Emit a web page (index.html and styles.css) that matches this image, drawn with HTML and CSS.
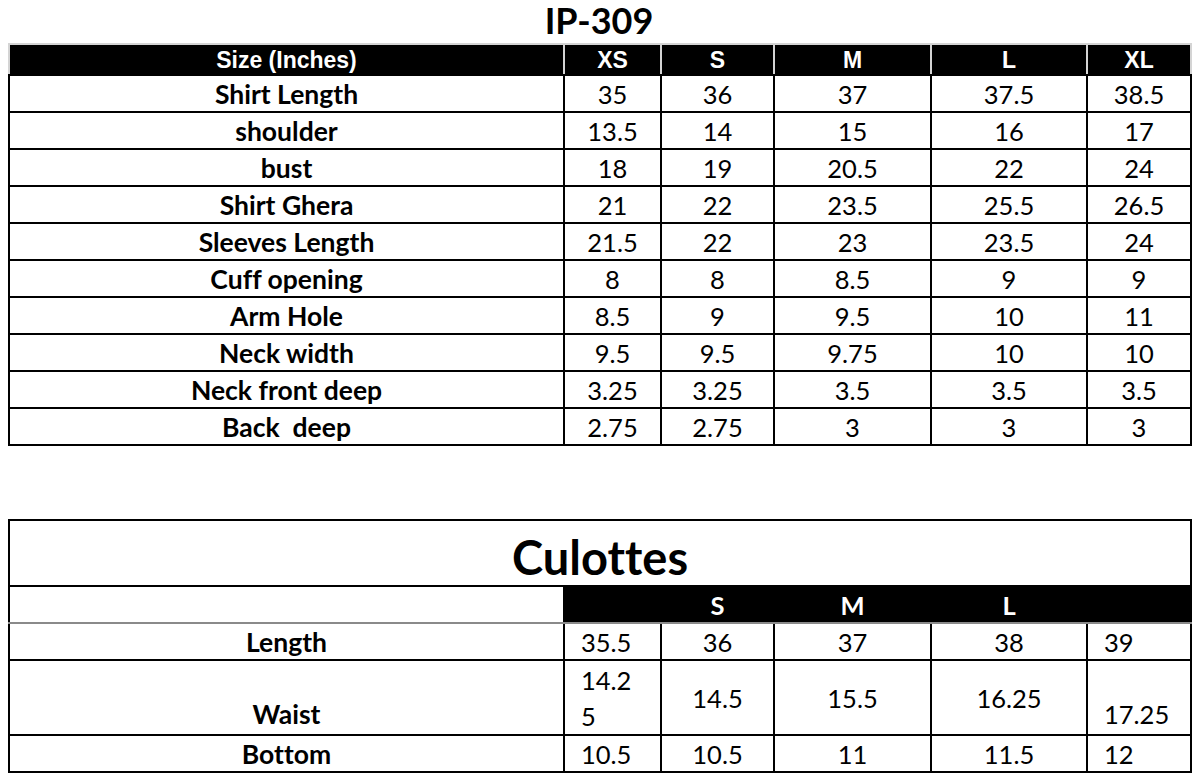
FILE: index.html
```html
<!DOCTYPE html>
<html>
<head>
<meta charset="utf-8">
<link rel="stylesheet" href="styles.css">
</head>
<body>
<div class="page">
  <h1 class="title">IP-309</h1>
  <table class="chart">
    <colgroup>
      <col class="c-label"><col class="c-xs"><col class="c-s"><col class="c-m"><col class="c-l"><col class="c-xl">
    </colgroup>
    <thead>
      <tr class="head">
        <th>Size (Inches)</th><th>XS</th><th>S</th><th>M</th><th>L</th><th>XL</th>
      </tr>
    </thead>
    <tbody>
      <tr><th>Shirt Length</th><td>35</td><td>36</td><td>37</td><td>37.5</td><td>38.5</td></tr>
      <tr><th>shoulder</th><td>13.5</td><td>14</td><td>15</td><td>16</td><td>17</td></tr>
      <tr><th>bust</th><td>18</td><td>19</td><td>20.5</td><td>22</td><td>24</td></tr>
      <tr><th>Shirt Ghera</th><td>21</td><td>22</td><td>23.5</td><td>25.5</td><td>26.5</td></tr>
      <tr><th>Sleeves Length</th><td>21.5</td><td>22</td><td>23</td><td>23.5</td><td>24</td></tr>
      <tr><th>Cuff opening</th><td>8</td><td>8</td><td>8.5</td><td>9</td><td>9</td></tr>
      <tr><th>Arm Hole</th><td>8.5</td><td>9</td><td>9.5</td><td>10</td><td>11</td></tr>
      <tr><th>Neck width</th><td>9.5</td><td>9.5</td><td>9.75</td><td>10</td><td>10</td></tr>
      <tr><th>Neck front deep</th><td>3.25</td><td>3.25</td><td>3.5</td><td>3.5</td><td>3.5</td></tr>
      <tr><th>Back&nbsp; deep</th><td>2.75</td><td>2.75</td><td>3</td><td>3</td><td>3</td></tr>
    </tbody>
  </table>

  <table class="chart culottes">
    <colgroup>
      <col class="c-label"><col class="c-xs"><col class="c-s"><col class="c-m"><col class="c-l"><col class="c-xl">
    </colgroup>
    <tbody>
      <tr class="cap"><td colspan="6">Culottes</td></tr>
      <tr class="chead">
        <td class="blank"></td><td></td><td>S</td><td>M</td><td>L</td><td></td>
      </tr>
      <tr class="r37"><th>Length</th><td class="left">35.5</td><td>36</td><td>37</td><td>38</td><td class="left">39</td></tr>
      <tr class="waist"><th>Waist</th><td class="left">14.2<br>5</td><td>14.5</td><td>15.5</td><td>16.25</td><td class="left bottom">17.25</td></tr>
      <tr class="r37"><th>Bottom</th><td class="left">10.5</td><td>10.5</td><td>11</td><td>11.5</td><td class="left">12</td></tr>
    </tbody>
  </table>
</div>
</body>
</html>
```

FILE: styles.css
```css
html, body {
  margin: 0;
  padding: 0;
  background: #ffffff;
}

.page {
  padding: 0 0 0 8px;
  font-family: Lato, "Open Sans", sans-serif;
  font-variant-ligatures: none;
  color: #000;
}

.title {
  margin: 0;
  width: 1182px;
  height: 43px;
  text-align: center;
  font-size: 36px;
  font-weight: 700;
  line-height: 40px;
  box-sizing: border-box;
}

.chart {
  width: 1182px;
  table-layout: fixed;
  border-collapse: collapse;
  font-size: 25.5px;
}

.c-label { width: 555px; }
.c-xs { width: 97px; }
.c-s { width: 113px; }
.c-m { width: 157px; }
.c-l { width: 156px; }
.c-xl { width: 104px; }

.chart th,
.chart td {
  border: 2px solid #000;
  padding: 0;
  text-align: center;
  vertical-align: middle;
  height: 37px;
  box-sizing: border-box;
  line-height: 28px;
  white-space: nowrap;
}

.chart tbody th {
  font-weight: 700;
  font-size: 26.5px;
}

.chart td {
  font-weight: 400;
}

.head th {
  background: #000;
  color: #fff;
  font-family: "Liberation Sans", Arial, sans-serif;
  font-weight: 700;
  font-size: 23px;
  height: 31px;
  line-height: 26px;
  border: 2px solid #d4d4d4;
  border-bottom-color: #000;
}

.culottes {
  margin-top: 73px;
}

.cap td {
  height: 66px;
  font-size: 47px;
  font-weight: 700;
  line-height: 52px;
  padding-top: 8px;
}

.chead td {
  background: #000;
  color: #fff;
  font-weight: 700;
  font-size: 25.5px;
  border-color: #000;
  border-bottom-color: #8a8a8a;
}

.chead td.blank {
  background: #fff;
}

.waist th,
.waist td {
  height: 75px;
  line-height: 36px;
}

.waist th {
  vertical-align: bottom;
  padding-bottom: 2px;
}

.chart td.left {
  text-align: left;
  padding-left: 16px;
}

.chart td.bottom {
  vertical-align: bottom;
  padding-bottom: 2px;
}
```
